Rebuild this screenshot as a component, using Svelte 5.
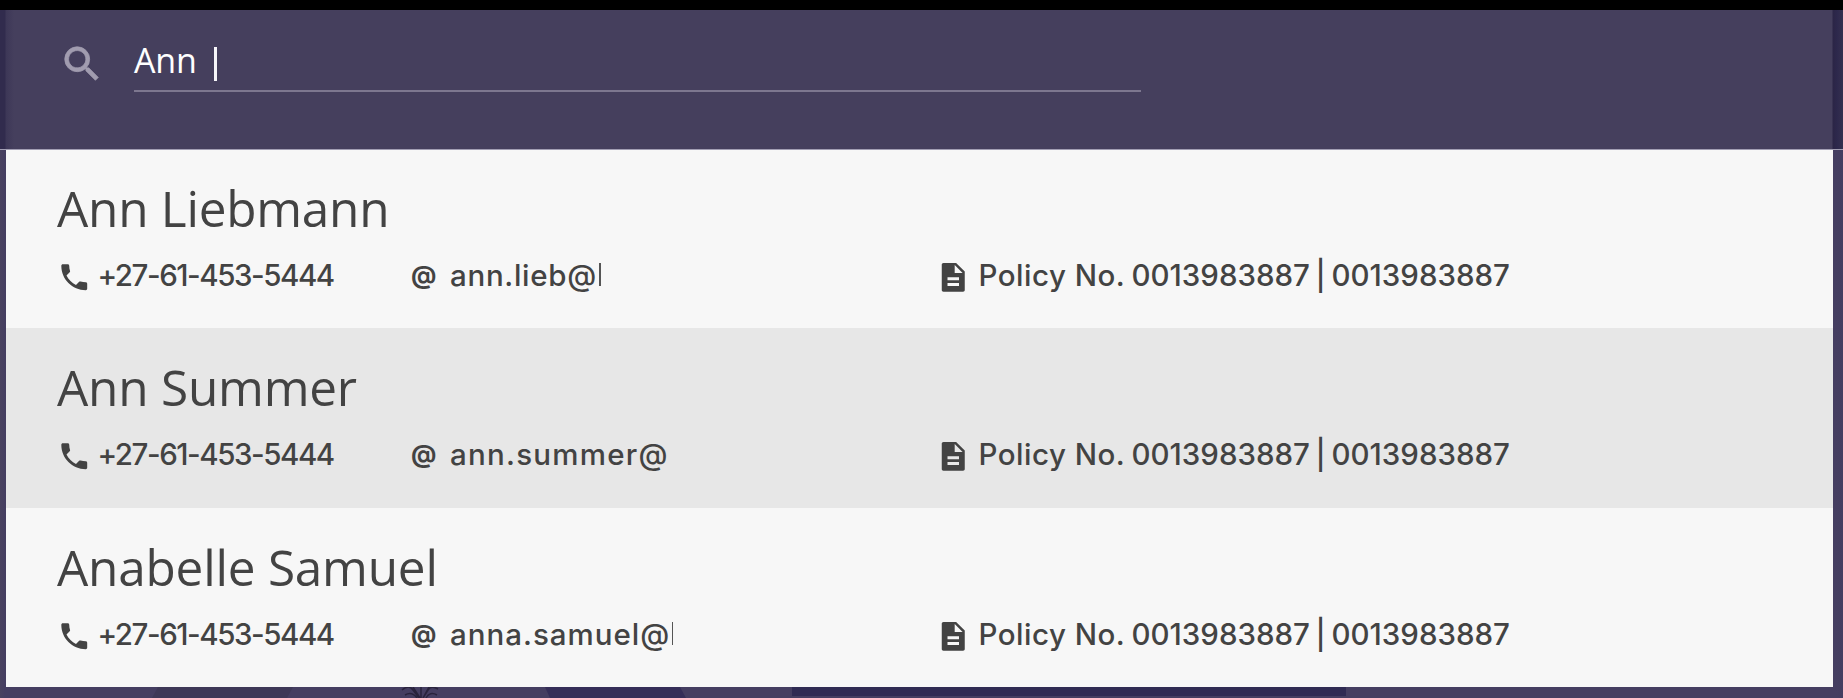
<script>
  const people = [
    { name: 'Ann Liebmann', nameGap: -0.25, email: 'ann.lieb@', emailGap: 0.7, sliver: 2 },
    { name: 'Ann Summer', nameGap: -0.22, email: 'ann.summer@', emailGap: 1.25, sliver: 0 },
    { name: 'Anabelle Samuel', nameGap: -0.22, email: 'anna.samuel@', emailGap: 1, sliver: 1 }
  ];
</script>

<main>
  <div class="topbar"></div>
  <header>
    <svg class="search" viewBox="0 0 24 24"><path d="M15.5 14h-.79l-.28-.27A6.47 6.47 0 0 0 16 9.5 6.5 6.5 0 1 0 9.5 16c1.61 0 3.09-.59 4.23-1.57l.27.28v.79l5 4.99L20.49 19l-4.99-5zm-6 0C7.01 14 5 11.99 5 9.5S7.01 5 9.5 5 14 7.01 14 9.5 11.99 14 9.5 14z" /></svg>
    <div class="field"><span class="query">Ann</span><span class="caret"></span></div>
  </header>
  <section>
    {#each people as p, i}
      <article class:active={i === 1}>
        <h2><span style:letter-spacing="{p.nameGap}px">{p.name}</span></h2>
        <div class="details">
          <div class="phone">
            <svg viewBox="0 0 24 24"><path d="M6.62 10.79c1.44 2.83 3.76 5.14 6.59 6.59l2.2-2.2c.27-.27.67-.36 1.02-.24 1.12.37 2.33.57 3.57.57.55 0 1 .45 1 1V20c0 .55-.45 1-1 1-9.39 0-17-7.61-17-17 0-.55.45-1 1-1h3.5c.55 0 1 .45 1 1 0 1.25.2 2.45.57 3.57.11.35.03.74-.25 1.02l-2.2 2.2z" /></svg>
            <span class="number">+27-61-453-5444</span>
          </div>
          <div class="email"><b>@</b><span class="address" style:letter-spacing="{p.emailGap}px">{p.email}</span><i style:width="{p.sliver}px"></i></div>
          <div class="policy">
            <svg viewBox="0 0 24 24"><path d="M14 2H5.200C4.500 2 4 2.500 4 3.200v17.600C4 21.500 4.500 22 5.200 22h13.600c.7 0 1.200-.5 1.200-1.200V8l-6-6zm2 16H8v-2h8v2zm0-4H8v-2h8v2zm-3-5V3.500L18.500 9H13z" /></svg>
            <span class="label">Policy No.</span><span class="digits">0013983887</span><span class="pipe">|</span><span class="digits">0013983887</span>
          </div>
        </div>
      </article>
    {/each}
  </section>
  <footer>
    <svg viewBox="0 0 1843 11" preserveAspectRatio="none">
      <path d="M158 0H293L287 11H152z" fill="#3e3857" />
      <path d="M545 0H680L686 11H550z" fill="#352e58" />
      <path d="M792 0H1346V9H792z" fill="#302b53" />
      <g fill="none" stroke="#29233c" stroke-width="1.500">
        <path d="M402 3q7-6 11 0l6 8M405 8q7-4 12 3M413 0l7 11M421 0v11M429 0l-6 11M438 2q-7-4-10 1l-5 8M437 8q-7-4-11 3" />
      </g>
    </svg>
  </footer>
</main>

<style>
  :global(body) { margin: 0; overflow: hidden; }
  main { width: 1843px; height: 698px; display: flex; flex-direction: column; background: linear-gradient(90deg, #49425f 0, #453e61 5px, #453e61 1835px, #443d60 1843px); }
  .topbar { height: 10px; background: #000; }
  header { height: 140px; box-sizing: border-box; display: flex; align-items: flex-start; padding: 30px 0 0 59px; background: linear-gradient(90deg, #312b4d 0, #312b4d 5px, #3d3757 6px, #453f5d 14px, #453f5d 1832px, #2b2546 1833px, #2d284c 1837px, #35304f 1843px); border-bottom: 1px solid #a29eb3; }
  .search { width: 46px; height: 46px; margin-top: 1px; fill: #a19caf; stroke: #a19caf; stroke-width: 0.4; }
  .field { width: 1007px; height: 52px; box-sizing: border-box; margin-left: 29px; border-bottom: 2px solid #7d778f; display: flex; color: #fff; font: 400 34px/40px "Open Sans", sans-serif; }
  .query { width: 80px; letter-spacing: -0.2px; }
  .caret { width: 3px; height: 34px; margin-top: 7px; background: #f7f6fa; }
  section { width: 1827px; margin-left: 6px; }
  article { height: 179.500px; box-sizing: border-box; padding: 24px 0 0 51px; background: #f7f7f7; color: #434343; }
  article:first-child { height: 178.500px; padding-top: 23px; }
  article.active { background: #e7e7e7; }
  h2 { margin: 0; height: 70px; font: 400 49.500px/70px "Open Sans", sans-serif; white-space: nowrap; }
  .details { height: 36px; margin-top: 17px; display: grid; grid-template-columns: 354px 525px 1fr; font: 500 29.500px/31px Inter, sans-serif; white-space: nowrap; }
  .details > div { display: flex; }
  .details svg { width: 34.500px; height: 34.500px; fill: #434343; flex: none; }
  .number { margin-left: 6px; letter-spacing: -1.45px; }
  .email b { width: 39px; font-size: 25px; font-weight: 700; }
  .email i { height: 23px; margin: 3px 0 0 2px; background: #555; }
  .label { margin-left: 8px; width: 153px; letter-spacing: 0.5px; }
  .digits { width: 177px; }
  .pipe { width: 16px; padding-left: 7px; }
  footer { height: 11px; }
  footer svg { display: block; width: 1843px; height: 11px; }
</style>
